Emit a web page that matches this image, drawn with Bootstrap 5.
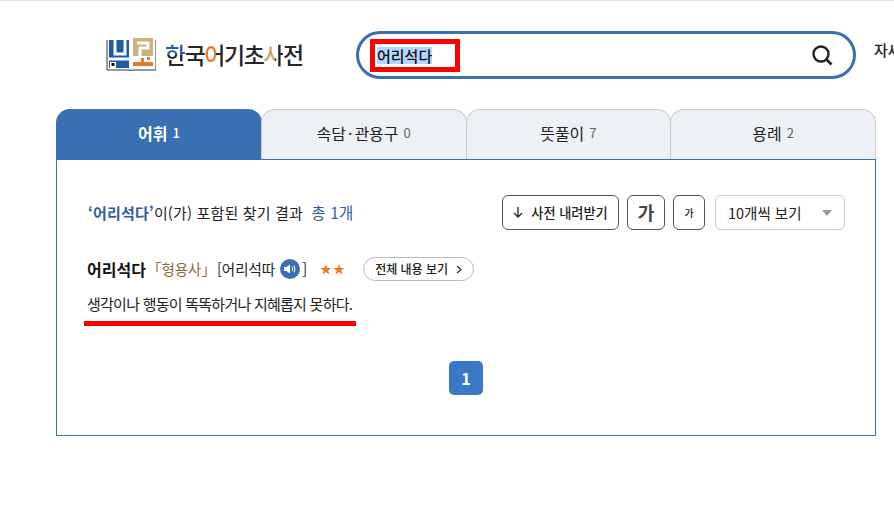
<!DOCTYPE html>
<html lang="ko">
<head>
  <meta charset="UTF-8" />
  <meta name="viewport" content="width=device-width, initial-scale=1" />
  <title>한국어기초사전</title>
  <link href="https://cdn.jsdelivr.net/npm/bootstrap@5.3.3/dist/css/bootstrap.min.css" rel="stylesheet" />
  <style>
    html, body { height: 100%; overflow: hidden; }
    body {
      width: 894px;
      background: #fff;
      color: #222;
      font-family: "Noto Sans CJK KR", "Noto Sans", sans-serif;
      font-size: 14px;
      border-top: 1px solid #e8e8e8;
    }
    .site-head { height: 108px; padding: 30px 0 0 106px; white-space: nowrap; overflow: hidden; }
    .logo-box { width: 251px; height: 46px; flex: none; margin-right: -1px; }
    .logo-name { font-size: 23px; font-weight: 500; color: #26262a; margin-left: 9px; line-height: 1; letter-spacing: -1.5px; }
    .part-blue, .part-orange, .part-sand { -webkit-background-clip: text; background-clip: text; color: transparent; }
    .part-blue { background-image: linear-gradient(180deg, #2a5ca8 52%, #26262a 52%); }
    .part-orange { background-image: linear-gradient(90deg, #ea7a28 58%, #26262a 58%); }
    .part-sand { background-image: linear-gradient(90deg, #c5a96a 62%, #26262a 62%); }
    .search-box {
      width: 500px; height: 48px; flex: none;
      border: 3px solid #3a70b3; border-radius: 24px;
      padding: 0 19px 0 18px;
    }
    .search-text { font-size: 15px; font-weight: 500; line-height: 17px; background: #b3d7ff; color: #111; }
    .red-box { position: absolute; left: 11px; top: 5px; width: 90px; height: 33px; border: 5px solid #f00; }
    .detail-link { margin-left: 18px; font-size: 15px; font-weight: 500; color: #222; }
    .tab-wrap { margin: 0 18px 0 56px; width: 820px; }
    .tab-row { flex-wrap: nowrap; }
    .tab-cell {
      flex: 1 1 0; height: 50px; padding-bottom: 4px;
      background: #edf0f4; color: #222;
      border: 1px solid #ccc; border-bottom: 0; border-radius: 14px 14px 0 0;
      font-size: 16px; line-height: 1;
      margin-left: -1px;
    }
    .tab-cell:first-child { margin-left: 0; }
    .tab-cell small { font-size: 13px; color: #666; margin-left: 5px; }
    .tab-dot { padding: 0 2px; }
    .tab-cell.tab-on { background: #3a70b3; border-color: #3a70b3; color: #fff; font-weight: 700; }
    .tab-cell.tab-on small { color: #fff; font-weight: 500; }
    .result-pane { height: 277px; border: 1px solid #3a70b3; padding: 35px 30px 0 30px; }
    .result-count { font-size: 15px; font-weight: 400; letter-spacing: .15px; padding-left: 1px; }
    .result-count b { color: #2f5f9e; font-weight: 700; }
    .result-count .total-num { color: #2f5f9e; margin-left: 4px; font-size: 15.5px; }
    .tool-btn {
      height: 35px; border: 1px solid #555; border-radius: 6px; background: #fff; color: #222;
      padding: 0; font-size: 13.2px; font-weight: 500;
    }
    .tool-down { width: 117px; }
    .tool-big { width: 38px; font-size: 18px; font-weight: 700; color: #444; }
    .tool-small { width: 32px; font-size: 10px; }
    .per-page { width: 130px; height: 35px; border: 1px solid #ccc; border-radius: 6px; padding: 0 12px; font-size: 14.5px; margin-left: 2px; }
    .per-caret { width: 0; height: 0; border-left: 5px solid transparent; border-right: 5px solid transparent; border-top: 6px solid #999; }
    .word-line { margin-top: 26px; height: 26px; white-space: nowrap; }
    .word-title { font-size: 16px; font-weight: 700; color: #111; }
    .word-pos { color: #8a6d3b; font-size: 14.5px; margin-left: 1px; }
    .word-pron { font-size: 14.5px; margin-left: 1px; }
    .sound-dot { width: 20px; height: 20px; border-radius: 50%; background: #3a70b3; margin: 0 2px 0 5px; }
    .word-stars { color: #ea7a28; font-size: 12px; margin-left: 13px; letter-spacing: 1px; }
    .view-all {
      margin-left: 17px; height: 24px; width: 111px; border: 1px solid #bbb; border-radius: 12px;
      font-size: 12px; font-weight: 500; color: #222;
    }
    .word-def-wrap { width: 272px; margin: 10px 0 0 -3px; padding: 0 0 5px 3px; border-bottom: 5px solid #f00; }
    .word-def { font-size: 15px; line-height: 24px; color: #222; letter-spacing: -.75px; }
    .page-cur {
      width: 34px; height: 34px; border-radius: 5px; background: #3a78c8; color: #fff;
      font-size: 16px; font-weight: 700; margin-top: 35px;
    }
  </style>
</head>
<body>
  <header class="site-head d-flex align-items-start">
    <div class="logo-box d-flex align-items-center">
      <svg width="50" height="34" viewBox="0 0 50 34" aria-hidden="true">
        <path d="M1 3V33H23Q25 33 25 34Q25 33 27 33H50V3" fill="none" stroke="#333" stroke-width="1"/>
        <rect x="3" y="3" width="20" height="28" fill="#1f5aa8"/>
        <path d="M9 3V17H19V3M3 22H23" fill="none" stroke="#fff" stroke-width="3"/>
        <rect x="4" y="25" width="6" height="6" fill="#fff"/>
        <rect x="5.5" y="26" width="3" height="3" fill="#111"/>
        <rect x="27" y="1" width="20" height="18" fill="#cdb27c"/>
        <path d="M31 6H42V11H34V19" fill="none" stroke="#fff" stroke-width="3"/>
        <path d="M27 25H35V21H38V25H47V29H27Z" fill="#ea7a28"/>
        <rect x="41" y="20" width="3" height="3" fill="#ea7a28"/>
      </svg>
      <span class="logo-name"><span class="part-blue">한</span>국<span class="part-orange">어</span>기초<span class="part-sand">사</span>전</span>
    </div>
    <div class="search-box position-relative d-flex align-items-center justify-content-between">
      <span class="search-text">어리석다</span>
      <svg width="24" height="24" viewBox="0 0 24 24" aria-hidden="true">
        <circle cx="11" cy="11" r="7.5" fill="none" stroke="#222" stroke-width="2.4"/>
        <path d="M16.5 16.5L21.5 21.5" stroke="#222" stroke-width="2.6"/>
      </svg>
      <div class="red-box"></div>
    </div>
    <span class="detail-link mt-2">자세히 찾기</span>
  </header>

  <main class="tab-wrap">
    <ul class="nav tab-row">
      <li class="tab-cell tab-on d-flex align-items-center justify-content-center">어휘<small>1</small></li>
      <li class="tab-cell d-flex align-items-center justify-content-center">속담<span class="tab-dot">·</span>관용구<small>0</small></li>
      <li class="tab-cell d-flex align-items-center justify-content-center">뜻풀이<small>7</small></li>
      <li class="tab-cell d-flex align-items-center justify-content-center">용례<small>2</small></li>
    </ul>
    <section class="result-pane">
      <div class="d-flex align-items-center justify-content-between">
        <div class="result-count"><b>‘어리석다’</b>이(가) 포함된 찾기 결과 <span class="total-num">총 1개</span></div>
        <div class="d-flex align-items-center gap-2">
          <button type="button" class="tool-btn tool-down d-flex align-items-center justify-content-center gap-2">
            <svg width="10" height="11" viewBox="0 0 10 11" aria-hidden="true"><path d="M5 0V10M1 6L5 10 9 6" fill="none" stroke="#222" stroke-width="1.3"/></svg>
            사전 내려받기
          </button>
          <button type="button" class="tool-btn tool-big">가</button>
          <button type="button" class="tool-btn tool-small">가</button>
          <div class="per-page d-flex align-items-center justify-content-between">10개씩 보기<span class="per-caret"></span></div>
        </div>
      </div>
      <div class="word-line d-flex align-items-center">
        <span class="word-title">어리석다</span>
        <span class="word-pos">「형용사」</span>
        <span class="word-pron d-flex align-items-center">[어리석따<span class="sound-dot d-inline-flex align-items-center justify-content-center">
          <svg width="12" height="10" viewBox="0 0 12 10" aria-hidden="true"><path d="M0 3H2.5L6 .5V9.5L2.5 7H0Z" fill="#fff"/><path d="M8 3Q9.5 5 8 7M10 1.5Q12 5 10 8.5" fill="none" stroke="#fff"/></svg>
        </span>]</span>
        <span class="word-stars">★★</span>
        <span class="view-all d-inline-flex align-items-center justify-content-center gap-2">전체 내용 보기
          <svg width="6" height="9" viewBox="0 0 6 9" aria-hidden="true"><path d="M1 1L5 4.5 1 8" fill="none" stroke="#333" stroke-width="1.3"/></svg>
        </span>
      </div>
      <div class="word-def-wrap"><span class="word-def">생각이나 행동이 똑똑하거나 지혜롭지 못하다.</span></div>
      <div class="d-flex justify-content-center">
        <span class="page-cur d-flex align-items-center justify-content-center">1</span>
      </div>
    </section>
  </main>

  <script src="https://cdn.jsdelivr.net/npm/bootstrap@5.3.3/dist/js/bootstrap.bundle.min.js"></script>
</body>
</html>
